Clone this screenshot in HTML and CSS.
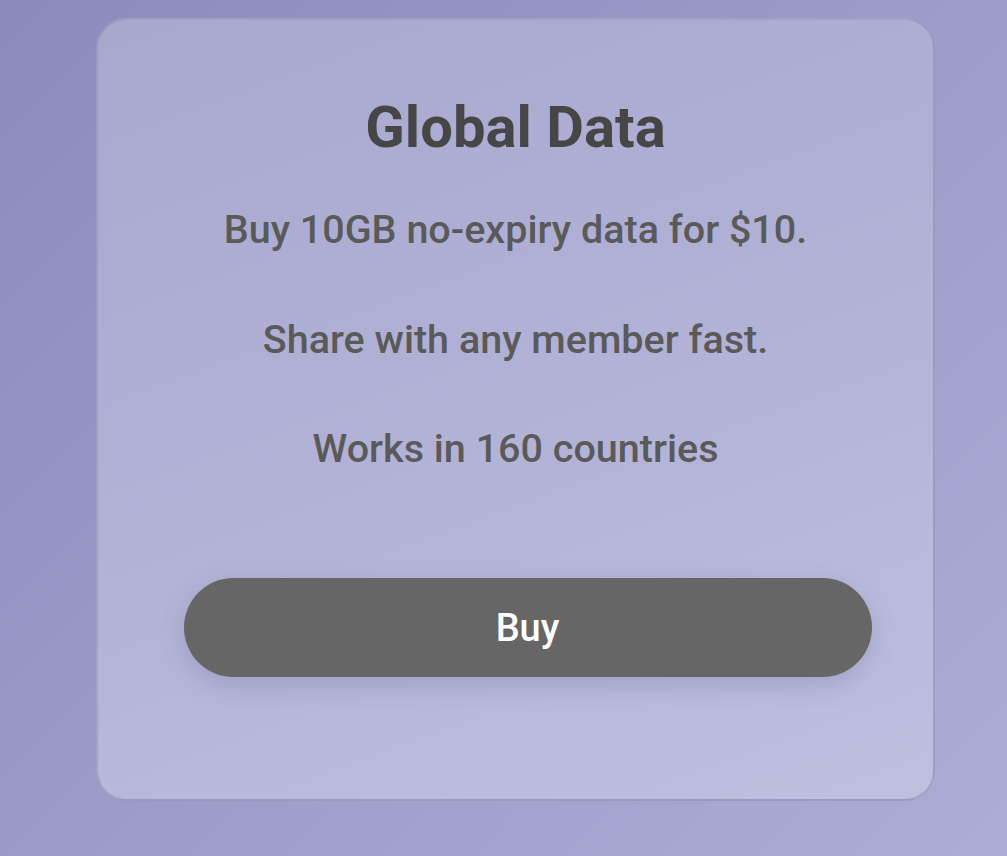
FILE: index.html
```html
<!DOCTYPE html>
<html>
<head>
<meta charset="utf-8">
<link rel="stylesheet" href="styles.css">
</head>
<body>
<div class="page">
  <div class="card">
    <h1 class="title">Global Data</h1>
    <p class="line first">Buy 10GB no-expiry data for $10.</p>
    <p class="line second">Share with any member fast.</p>
    <p class="line third">Works in 160 countries</p>
    <button class="buy">Buy</button>
  </div>
</div>
</body>
</html>
```
FILE: styles.css
```css
html, body {
  margin: 0;
  padding: 0;
  height: 100%;
}
body {
  background: linear-gradient(135deg, #8a8abd 0%, #9c9cca 50%, #acacd6 100%);
  font-family: Roboto, "Noto Sans", sans-serif;
  overflow: hidden;
}
.page {
  padding: 18px 0 0 96px;
}
.card {
  box-sizing: border-box;
  width: 839px;
  height: 783px;
  border-radius: 30px;
  border: 2px solid rgba(140, 140, 170, 0.55);
  background: linear-gradient(160deg, #a8a8cf 0%, #b3b3d8 55%, #bfbfe0 100%);
  display: flex;
  flex-direction: column;
  align-items: center;
  padding-top: 77px;
}
.title {
  margin: 0;
  font-size: 58px;
  font-weight: 700;
  color: #464646;
  line-height: 60px;
}
.line {
  margin: 0;
  font-size: 39.5px;
  font-weight: 500;
  color: #5a5a5a;
  line-height: 44px;
}
.first { margin-top: 51px; }
.second { margin-top: 66px; }
.third { margin-top: 65px; }
.buy {
  margin-top: 107px;
  margin-left: 24px;
  width: 688px;
  height: 99px;
  border: none;
  border-radius: 50px;
  background: #666666;
  color: #ffffff;
  font-family: Roboto, "Noto Sans", sans-serif;
  font-size: 38px;
  font-weight: 500;
  box-shadow: 0 8px 24px rgba(90, 90, 130, 0.25);
}
```
